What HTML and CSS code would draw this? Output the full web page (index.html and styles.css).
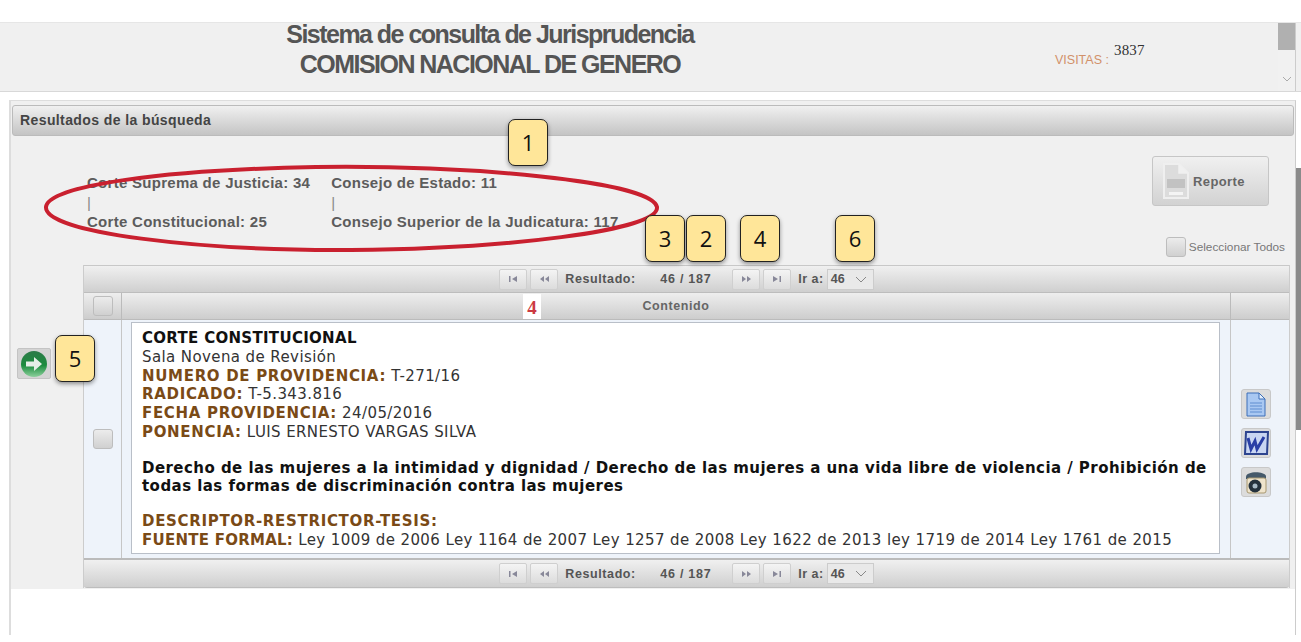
FILE: index.html
```html
<!DOCTYPE html>
<html lang="es">
<head>
    <meta charset="UTF-8">
    <meta name="viewport" content="width=device-width, initial-scale=1.0">
    <title>Sistema de consulta de Jurisprudencia</title>
    <link rel="stylesheet" href="styles.css">
</head>
<body>
    <div class="page">
        <div class="header">
            <div class="title">
                <div>Sistema de consulta de Jurisprudencia</div>
                <div>COMISION NACIONAL DE GENERO</div>
            </div>
            <div class="visits"><span class="visits-label">VISITAS :</span><span class="visits-count">3837</span></div>
            <div class="header-scroll">
                <div class="header-thumb"></div>
                <svg class="header-down" width="10" height="6" viewBox="0 0 10 6"><path d="M1 1l4 4 4-4" fill="none" stroke="#aaa" stroke-width="1"/></svg>
            </div>
        </div>

        <div class="panel">
            <div class="panel-head">Resultados de la búsqueda</div>
            <div class="panel-top">
                <div class="summary">
                    <div class="summary-col">
                        <div>Corte Suprema de Justicia: 34</div>
                        <div class="sep">|</div>
                        <div>Corte Constitucional: 25</div>
                    </div>
                    <div class="summary-col">
                        <div>Consejo de Estado: 11</div>
                        <div class="sep">|</div>
                        <div>Consejo Superior de la Judicatura: 117</div>
                    </div>
                </div>
                <div class="tools">
                    <button class="report">
                        <svg width="30" height="40" viewBox="0 0 30 40"><path d="M3 3h15l9 9v25H3z" fill="#dcdcdc" stroke="#efefef" stroke-width="2"/><path d="M18 3v9h9" fill="#f0f0f0" stroke="#f0f0f0" stroke-width="1.500"/><rect x="6" y="18" width="18" height="9" fill="#c2c2c2"/><rect x="8" y="31" width="14" height="3" fill="#f4f4f4"/></svg>
                        <span>Reporte</span>
                    </button>
                    <label class="select-all"><span class="check"></span>Seleccionar Todos</label>
                </div>
            </div>

            <div class="results">
                <div class="side">
                    <button class="go">
                        <svg width="28" height="28" viewBox="0 0 28 28">
                            <defs><linearGradient id="goFill" x1="0" y1="0" x2="0" y2="1"><stop offset="0" stop-color="#2c7a48"/><stop offset="0.55" stop-color="#1c8c3e"/><stop offset="1" stop-color="#8cd09c"/></linearGradient></defs>
                            <circle cx="14" cy="14" r="13" fill="url(#goFill)"/>
                            <path d="M6 11.500h8V7l8 7-8 7v-4.500H6z" fill="#e6efe8"/>
                        </svg>
                    </button>
                </div>
                <div class="grid">
                    <div class="pager">
                        <button class="page-btn"><svg width="8" height="6" viewBox="0 0 8 6"><path d="M0 0h1.500v6H0zM8 0v6L3 3z" fill="#889"/></svg></button>
                        <button class="page-btn"><svg width="9" height="6" viewBox="0 0 9 6"><path d="M4 0v6L0 3zM9 0v6L5 3z" fill="#889"/></svg></button>
                        <span class="pager-label">Resultado:</span>
                        <span class="pager-count">46 / 187</span>
                        <button class="page-btn"><svg width="9" height="6" viewBox="0 0 9 6"><path d="M0 0v6l4-3zM5 0v6l4-3z" fill="#889"/></svg></button>
                        <button class="page-btn"><svg width="8" height="6" viewBox="0 0 8 6"><path d="M0 0v6l5-3zM6.500 0H8v6H6.500z" fill="#889"/></svg></button>
                        <span class="pager-go">Ir a:</span>
                        <div class="page-select">46<svg width="12" height="7" viewBox="0 0 12 7"><path d="M1 1l5 5 5-5" fill="none" stroke="#888"/></svg></div>
                    </div>
                    <div class="col-head">
                        <div class="col-check"><span class="check"></span></div>
                        <div class="col-title">Contenido<span class="red-num">4</span></div>
                        <div class="col-end"></div>
                    </div>
                    <div class="row">
                        <div class="row-check"><span class="check"></span></div>
                        <div class="row-main">
                            <div class="doc">
                                <div class="doc-org">CORTE CONSTITUCIONAL</div>
                                <div>Sala Novena de Revisión</div>
                                <div><b>NUMERO DE PROVIDENCIA:</b> T-271/16</div>
                                <div><b>RADICADO:</b> T-5.343.816</div>
                                <div><b>FECHA PROVIDENCIA:</b> 24/05/2016</div>
                                <div><b>PONENCIA:</b> LUIS ERNESTO VARGAS SILVA</div>
                                <div class="doc-subject">Derecho de las mujeres a la intimidad y dignidad / Derecho de las mujeres a una vida libre de violencia / Prohibición de todas las formas de discriminación contra las mujeres</div>
                                <div><b>DESCRIPTOR-RESTRICTOR-TESIS:</b></div>
                                <div><b class="doc-source">FUENTE FORMAL:</b> Ley 1009 de 2006 Ley 1164 de 2007 Ley 1257 de 2008 Ley 1622 de 2013 ley 1719 de 2014 Ley 1761 de 2015</div>
                            </div>
                        </div>
                        <div class="row-actions">
                            <button class="action">
                                <svg width="20" height="25" viewBox="0 0 20 25"><path d="M1 1h12l6 6v17H1z" fill="#a9c8f2" stroke="#3d6fb8"/><path d="M13 1v6h6z" fill="#e6f0fc" stroke="#3d6fb8"/><path d="M4 11h12M4 14h12M4 17h12M4 20h12" stroke="#5f8dd0"/></svg>
                            </button>
                            <button class="action">
                                <svg width="26" height="26" viewBox="0 0 26 26"><path d="M3 2h22l-1 22H2z" fill="#c9d6f2" stroke="#2d448f" stroke-width="2"/><path d="M5 8l3 11 4-8 2 8 7-12" fill="none" stroke="#2a3fa6" stroke-width="3"/></svg>
                            </button>
                            <button class="action">
                                <svg width="24" height="26" viewBox="0 0 24 26"><path d="M2 8c0-6 18-6 20-1v3H2z" fill="#45596a"/><rect x="3" y="9" width="19" height="15" rx="2" fill="#efe4cc" stroke="#a89870"/><circle cx="11" cy="17" r="6.500" fill="#25323d"/><circle cx="11" cy="17" r="2.500" fill="#a8bac6"/></svg>
                            </button>
                        </div>
                    </div>
                    <div class="pager pager-bottom">
                        <button class="page-btn"><svg width="8" height="6" viewBox="0 0 8 6"><path d="M0 0h1.500v6H0zM8 0v6L3 3z" fill="#889"/></svg></button>
                        <button class="page-btn"><svg width="9" height="6" viewBox="0 0 9 6"><path d="M4 0v6L0 3zM9 0v6L5 3z" fill="#889"/></svg></button>
                        <span class="pager-label">Resultado:</span>
                        <span class="pager-count">46 / 187</span>
                        <button class="page-btn"><svg width="9" height="6" viewBox="0 0 9 6"><path d="M0 0v6l4-3zM5 0v6l4-3z" fill="#889"/></svg></button>
                        <button class="page-btn"><svg width="8" height="6" viewBox="0 0 8 6"><path d="M0 0v6l5-3zM6.500 0H8v6H6.500z" fill="#889"/></svg></button>
                        <span class="pager-go">Ir a:</span>
                        <div class="page-select">46<svg width="12" height="7" viewBox="0 0 12 7"><path d="M1 1l5 5 5-5" fill="none" stroke="#888"/></svg></div>
                    </div>
                </div>
            </div>
        </div>

        <div class="page-scroll"></div>

        <!-- annotations drawn over the screenshot -->
        <svg class="ring" width="630" height="100" viewBox="0 0 630 100"><path d="M10 50C12 28 130 13 280 10c150-2 336 14 341 40 3 24-156 42-306 43C165 94 8 76 10 50z" fill="none" stroke="#c9202f" stroke-width="4"/></svg>
        <div class="note note-1">1</div>
        <div class="note note-3">3</div>
        <div class="note note-2">2</div>
        <div class="note note-4">4</div>
        <div class="note note-6">6</div>
        <div class="note note-5">5</div>
    </div>
</body>
</html>
```

FILE: styles.css
```css
* {
    margin: 0;
    padding: 0;
    box-sizing: border-box;
}

html, body {
    height: 100%;
    overflow: hidden;
    background: #fff;
}

body {
    font-family: "Liberation Sans", Arial, sans-serif;
    color: #555;
}

.page {
    position: relative;
    width: 1301px;
    height: 642px;
    padding-top: 22px;
    overflow: hidden;
}

button {
    font-family: inherit;
    cursor: pointer;
}

/* Header */
.header {
    display: flex;
    height: 70px;
    background: #f0f0f0;
    border-top: 1px solid #e6e6e6;
    border-bottom: 1px solid #d8d8d8;
}

.title {
    width: 500px;
    margin-left: 240px;
    margin-top: -4px;
    text-align: center;
    font-size: 25px;
    font-weight: bold;
    letter-spacing: -1.530px;
    line-height: 30px;
    color: #555;
    flex-shrink: 0;
}

.visits {
    display: flex;
    align-items: flex-start;
    margin-left: 315px;
    width: 223px;
    flex-shrink: 0;
}

.visits-label {
    margin-top: 30px;
    font-size: 12.500px;
    color: #d2906a;
}

.visits-count {
    margin: 19px 0 0 5px;
    font-family: "Liberation Serif", serif;
    font-size: 15px;
    letter-spacing: 0.200px;
    color: #333;
}

.header-scroll {
    width: 18px;
    background: #f1f1f1;
    border-right: 1px solid #ccc;
    display: flex;
    flex-direction: column;
    align-items: center;
    justify-content: space-between;
    padding-bottom: 9px;
}

.header-thumb {
    width: 100%;
    height: 27px;
    background: #b0b0b0;
}

/* Panel */
.panel {
    margin: 8px 5px 0 9px;
    height: 535px;
    border: 1px solid #ddd;
    border-left-width: 2px;
    border-right-color: #ccc;
    border-bottom: 0;
    padding: 4px 1px 0 1px;
    background: linear-gradient(#f0f0f0 488px, #fff 488px);
}

.panel-head {
    height: 31px;
    line-height: 29px;
    padding-left: 7px;
    font-size: 14px;
    font-weight: bold;
    letter-spacing: 0.400px;
    color: #444;
    background: linear-gradient(#f0f0f0, #c4c4c4);
    border: 1px solid #bbb;
    border-radius: 3px;
}

.panel-top {
    display: flex;
    justify-content: space-between;
    height: 129px;
}

.summary {
    display: flex;
    gap: 21px;
    padding: 37px 0 0 75px;
    font-size: 15px;
    font-weight: bold;
    letter-spacing: 0.280px;
    line-height: 19.500px;
    color: #5c5c5c;
}

.sep {
    font-weight: normal;
    color: #888;
}

.tools {
    display: flex;
    flex-direction: column;
    align-items: flex-end;
    padding-top: 20px;
}

.report {
    display: flex;
    align-items: center;
    gap: 2px;
    width: 117px;
    height: 50px;
    margin-right: 25px;
    padding-left: 8px;
    font-size: 13px;
    font-weight: bold;
    letter-spacing: 0.400px;
    color: #666;
    background: linear-gradient(#f0f0f0, #d2d2d2);
    border: 1px solid #c6c6c6;
    border-radius: 3px;
}

.select-all {
    display: flex;
    align-items: center;
    gap: 3px;
    margin-top: 31px;
    margin-right: 9px;
    font-size: 11.800px;
    color: #777;
}

.check {
    display: inline-block;
    width: 20px;
    height: 20px;
    background: linear-gradient(#ececec, #d0d0d0);
    border: 1px solid #bdbdbd;
    border-radius: 3px;
}

/* Results */
.results {
    display: flex;
}

.side {
    width: 71px;
    flex-shrink: 0;
}

.go {
    display: flex;
    align-items: center;
    justify-content: center;
    width: 34px;
    height: 31px;
    margin: 83px 0 0 5px;
    background: #d4d4d4;
    border: 1px solid #c4c4c4;
    border-radius: 2px;
}

.grid {
    width: 1207px;
    border-left: 1px solid #ccc;
    border-right: 1px solid #ccc;
}

.pager {
    display: flex;
    align-items: center;
    justify-content: center;
    height: 28px;
    background: linear-gradient(#f0f0f0, #cfcfcf);
    border-top: 1px solid #c8c8c8;
    border-bottom: 1px solid #bdbdbd;
    font-size: 12.500px;
    font-weight: bold;
    color: #555;
}

.pager-bottom {
    height: 30px;
    border-top: 2px solid #bbb;
    border-radius: 0 0 3px 3px;
}

.page-btn {
    display: flex;
    align-items: center;
    justify-content: center;
    width: 28px;
    height: 21px;
    margin-right: 3px;
    background: linear-gradient(#f4f4f4, #dcdcdc);
    border: 1px solid #cfcfcf;
    border-radius: 2px;
}

.pager-label {
    width: 95px;
    margin-left: 4px;
    letter-spacing: 0.600px;
}

.pager-count {
    width: 72px;
    letter-spacing: 0.750px;
}

.pager-go {
    margin: 0 3px 0 4px;
    letter-spacing: 0.500px;
}

.page-select {
    display: flex;
    align-items: center;
    justify-content: space-between;
    width: 47px;
    height: 21px;
    padding: 0 6px 0 3px;
    background: #e9e9e9;
    border: 1px solid #ccc;
    color: #555;
}

.col-head {
    display: flex;
    height: 27px;
    background: linear-gradient(#eeeeee, #cdcdcd);
    border-bottom: 1px solid #bbb;
}

.col-check {
    display: flex;
    justify-content: center;
    align-items: center;
    width: 38px;
    border-right: 1px solid #bbb;
}

.col-title {
    position: relative;
    flex: 1;
    text-align: center;
    line-height: 27px;
    font-size: 12.500px;
    font-weight: bold;
    letter-spacing: 0.600px;
    color: #666;
    border-right: 1px solid #bbb;
}

.red-num {
    position: absolute;
    left: 401px;
    top: 1px;
    width: 18px;
    height: 25px;
    text-align: center;
    background: #fff;
    font-family: "Liberation Serif", serif;
    font-size: 19px;
    color: #cc3a42;
    letter-spacing: 0;
}

.col-end {
    width: 58px;
}

.row {
    display: flex;
    height: 238px;
    background: #eef3fa;
}

.row-check {
    display: flex;
    align-items: center;
    justify-content: center;
    width: 38px;
    border-right: 1px solid #c6c6c6;
}

.row-main {
    flex: 1;
    padding: 2px 10px 4px 9px;
    border-right: 1px solid #c6c6c6;
}

.doc {
    height: 100%;
    overflow: hidden;
    padding: 6px 5px 0 10px;
    background: #fff;
    border: 1px solid #b9bfc8;
    font-family: "DejaVu Sans", Verdana, sans-serif;
    font-size: 15px;
    letter-spacing: 0.400px;
    line-height: 18.800px;
    color: #333;
}

.doc b {
    letter-spacing: 0.680px;
    color: #7a4a16;
}

.doc b.doc-source {
    letter-spacing: 0.250px;
}

.doc-org {
    font-weight: bold;
    letter-spacing: 0.300px;
    color: #111;
}

.doc-subject {
    margin: 17px 0 17px;
    font-weight: bold;
    letter-spacing: 0.450px;
    line-height: 18px;
    color: #111;
}

.row-actions {
    display: flex;
    flex-direction: column;
    align-items: center;
    justify-content: flex-start;
    gap: 9px;
    width: 58px;
    padding: 69px 9px 0 0;
}

.action {
    display: flex;
    align-items: center;
    justify-content: center;
    flex-shrink: 0;
    width: 30px;
    height: 30px;
    background: #dcdcdc;
    border: 1px solid #c8c8c8;
    border-radius: 3px;
}

.page-scroll {
    position: absolute;
    top: 168px;
    right: 0;
    width: 5px;
    height: 262px;
    background: #8a8a8a;
}

/* Annotations */
.ring {
    position: absolute;
    left: 36px;
    top: 157px;
}

.note {
    position: absolute;
    width: 40px;
    height: 47px;
    text-align: center;
    line-height: 45px;
    font-family: "Open Sans", sans-serif;
    font-size: 22px;
    color: #111;
    background: #ffe699;
    border: 1px solid #222;
    border-radius: 7px;
    box-shadow: 0 2px 4px rgba(0, 0, 0, 0.4);
}

.note-1 { left: 508px; top: 119px; }
.note-3 { left: 645px; top: 215px; }
.note-2 { left: 686px; top: 215px; }
.note-4 { left: 740px; top: 215px; }
.note-6 { left: 835px; top: 215px; }
.note-5 { left: 55px; top: 335px; }
```
